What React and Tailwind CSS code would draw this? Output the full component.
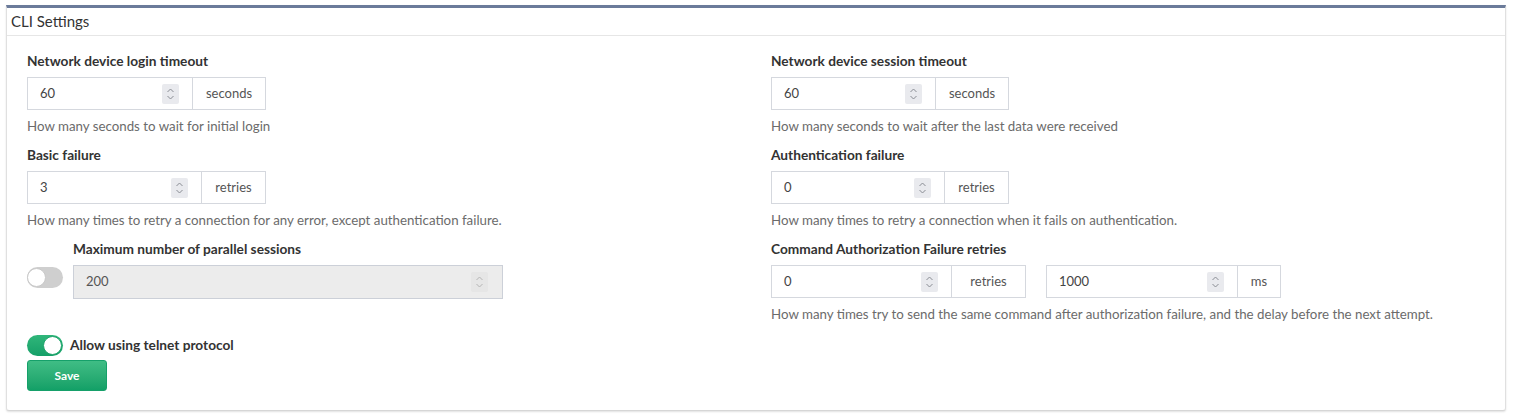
import React, { useState } from 'react';

const font = { fontFamily: 'Lato, "Liberation Sans", sans-serif' };

function Spinner({ disabled }) {
  return (
    <span
      className={`flex h-[20px] w-[17px] shrink-0 items-center justify-center rounded-[2px] ${
        disabled ? 'bg-[#e6e6e6]' : 'bg-[#e9eaee]'
      }`}
    >
      <svg width="9" height="14" viewBox="0 0 9 14" fill="none" stroke={disabled ? '#b5b5b5' : '#8a8d94'} strokeWidth="1">
        <path d="M1.5 5 L4.5 2 L7.5 5" />
        <path d="M1.5 9 L4.5 12 L7.5 9" />
      </svg>
    </span>
  );
}

function NumberGroup({ value, unit, inputW, unitW }) {
  return (
    <div className="flex h-[33px] text-[13px] text-[#444]">
      <div
        className={`flex items-center justify-between border border-[#d5d8de] bg-white pl-[12px] pr-[13px] ${inputW}`}
      >
        <span>{value}</span>
        <Spinner />
      </div>
      <div
        className={`flex items-center justify-center border border-l-0 border-[#d5d8de] bg-white text-[#555] ${unitW}`}
      >
        {unit}
      </div>
    </div>
  );
}

function Label({ children }) {
  return <div className="mb-[8px] text-[13.7px] font-bold leading-[16px] text-[#333]">{children}</div>;
}

function Help({ children }) {
  return <div className="mt-[8px] text-[13.3px] leading-[16px] text-[#6b6b6b]">{children}</div>;
}

function Toggle({ on, onClick }) {
  return (
    <button
      onClick={onClick}
      className={`relative h-[21px] w-[36px] shrink-0 rounded-full ${
        on ? 'bg-gradient-to-b from-[#2fb67a] to-[#14a068]' : 'bg-[#cfcfcf]'
      }`}
    >
      <span
        className={`absolute top-[1px] h-[19px] w-[19px] rounded-full border bg-white ${
          on ? 'right-[1px] border-[#1fa36b]' : 'left-[0px] border-[#c9c9c9]'
        }`}
      />
    </button>
  );
}

export default function App() {
  const [limit, setLimit] = useState(false);
  const [telnet, setTelnet] = useState(true);

  return (
    <div className="min-h-[414px] bg-white pl-[6px] pr-[8px] pt-[5px]" style={font}>
      <div className="h-[406px] rounded-b-[3px] border-x border-b border-t-[3px] border-x-[#e0e0e0] border-b-[#d6d6d6] border-t-[#6b7b9a] bg-white shadow-[0_1px_2px_rgba(0,0,0,0.12)]">
        <div className="flex h-[28px] items-center border-b border-[#e6e6e6] pl-[4px] text-[15px] text-[#333]">
          CLI Settings
        </div>

        <div className="pl-[20px] pr-[20px] pt-[17px]">
          <div className="grid grid-cols-2 gap-x-[30px]">
            {/* left column */}
            <div>
              <Label>Network device login timeout</Label>
              <NumberGroup value="60" unit="seconds" inputW="w-[166px]" unitW="w-[73px]" />
              <Help>How many seconds to wait for initial login</Help>

              <div className="mt-[13px]">
                <Label>Basic failure</Label>
                <NumberGroup value="3" unit="retries" inputW="w-[175px]" unitW="w-[64px]" />
                <Help>How many times to retry a connection for any error, except authentication failure.</Help>
              </div>

              <div className="mt-[13px] flex gap-[10px]">
                <div className="pt-[26px]">
                  <Toggle on={limit} onClick={() => setLimit(!limit)} />
                </div>
                <div>
                  <Label>Maximum number of parallel sessions</Label>
                  <div className="flex h-[34px] w-[430px] items-center justify-between border border-[#ccd0d8] bg-[#ececec] pl-[12px] pr-[14px] text-[13px] text-[#555]">
                    <span>200</span>
                    <Spinner disabled />
                  </div>
                </div>
              </div>
            </div>

            {/* right column */}
            <div>
              <Label>Network device session timeout</Label>
              <NumberGroup value="60" unit="seconds" inputW="w-[165px]" unitW="w-[73px]" />
              <Help>How many seconds to wait after the last data were received</Help>

              <div className="mt-[13px]">
                <Label>Authentication failure</Label>
                <NumberGroup value="0" unit="retries" inputW="w-[174px]" unitW="w-[64px]" />
                <Help>How many times to retry a connection when it fails on authentication.</Help>
              </div>

              <div className="mt-[13px]">
                <Label>Command Authorization Failure retries</Label>
                <div className="flex gap-[20px]">
                  <NumberGroup value="0" unit="retries" inputW="w-[181px]" unitW="w-[74px]" />
                  <NumberGroup value="1000" unit="ms" inputW="w-[192px]" unitW="w-[43px]" />
                </div>
                <Help>How many times try to send the same command after authorization failure, and the delay before the next attempt.</Help>
              </div>
            </div>
          </div>

          <div className="mt-[13px] flex items-center gap-[7px]">
            <Toggle on={telnet} onClick={() => setTelnet(!telnet)} />
            <span className="text-[13.7px] font-bold text-[#333]">Allow using telnet protocol</span>
          </div>

          <button className="mt-[4px] h-[31px] w-[80px] rounded-[3px] border border-[#16a06a] bg-gradient-to-b from-[#3fbd85] to-[#12a067] text-[12px] font-bold text-white">
            Save
          </button>
        </div>
      </div>
    </div>
  );
}
